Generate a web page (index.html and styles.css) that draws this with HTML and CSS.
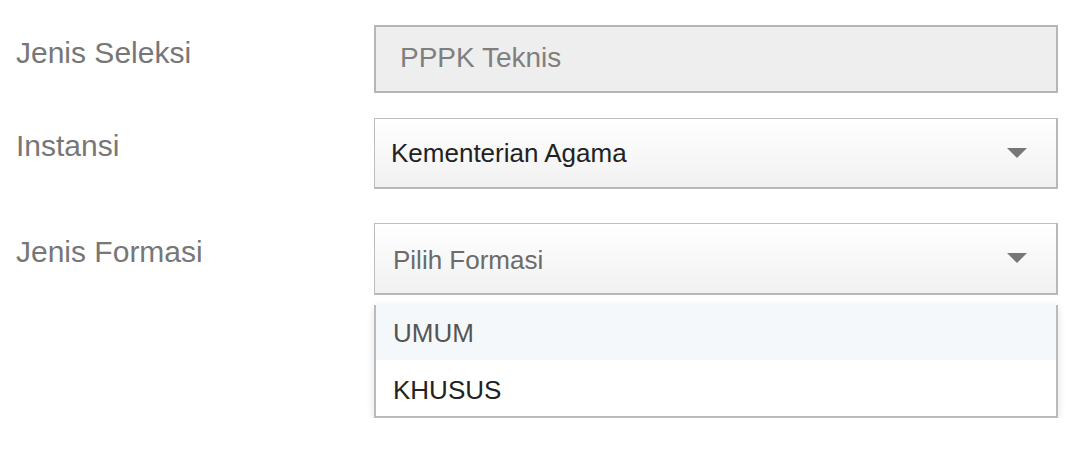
FILE: index.html
```html
<!DOCTYPE html>
<html lang="id">
<head>
<meta charset="utf-8">
<title>Formasi</title>
<link rel="stylesheet" href="styles.css">
</head>
<body>
<div class="form">
  <div class="row row-seleksi">
    <div class="label">Jenis Seleksi</div>
    <div class="control">
      <div class="field field-readonly">PPPK Teknis</div>
    </div>
  </div>
  <div class="row row-instansi">
    <div class="label">Instansi</div>
    <div class="control">
      <div class="field field-select">
        <span class="value">Kementerian Agama</span>
        <span class="caret"></span>
      </div>
    </div>
  </div>
  <div class="row row-formasi">
    <div class="label">Jenis Formasi</div>
    <div class="control">
      <div class="field field-select field-open">
        <span class="placeholder">Pilih Formasi</span>
        <span class="caret"></span>
      </div>
      <ul class="menu">
        <li class="item item-active">UMUM</li>
        <li class="item">KHUSUS</li>
      </ul>
    </div>
  </div>
</div>
</body>
</html>
```
FILE: styles.css
```css
html, body {
  margin: 0;
  padding: 0;
  background: #fff;
}
body {
  font-family: "Liberation Sans", Arial, sans-serif;
}
.form {
  padding: 25px 34px 0 16px;
  display: flex;
  flex-direction: column;
}
.row {
  display: grid;
  grid-template-columns: 358px 684px;
}
.row-seleksi { margin-bottom: 25px; }
.row-instansi { margin-bottom: 34px; }
.label {
  font-size: 30px;
  line-height: 34px;
  color: #777;
  padding-top: 11px;
}
.row-formasi .label { padding-top: 12px; }
.control {
  position: relative;
}
.field {
  box-sizing: border-box;
  border: 2px solid #b5b5b5;
  font-size: 26px;
  display: flex;
  align-items: center;
}
.field-readonly {
  height: 68px;
  background: #eeeeee;
  color: #7f7f7f;
  font-size: 28px;
  padding-left: 24px;
  padding-bottom: 2px;
}
.field-select {
  height: 71px;
  background: linear-gradient(#ffffff, #f1f1f1);
  padding-left: 16px;
  padding-right: 29px;
  justify-content: space-between;
  padding-top: 1px;
  border-width: 1px 2px 2px 1px;
  border-color: #bdbdbd #b8b8b8 #b8b8b8 #bdbdbd;
}
.field-open {
  height: 72px;
  padding-left: 18px;
  padding-top: 4px;
}
.value { color: #222; }
.placeholder { color: #6b6b6b; }
.caret {
  width: 0;
  height: 0;
  border-left: 10px solid transparent;
  border-right: 10px solid transparent;
  border-top: 10px solid #777;
}
.field-select .caret { margin-top: -2px; }
.field-open .caret { margin-top: -6px; }
.menu {
  list-style: none;
  margin: 10px 0 0 0;
  padding: 0;
  border: 2px solid #bbb;
  border-top: 0;
  box-shadow: 0 2px 8px rgba(0, 0, 0, 0.12);
  background: #fff;
  font-size: 26px;
}
.item {
  height: 55px;
  display: flex;
  align-items: center;
  padding-left: 17px;
  padding-top: 2px;
  box-sizing: border-box;
  color: #222;
}
.item + .item {
  height: 56px;
  padding-top: 4px;
}
.item-active {
  background: #f5f8fb;
  color: #555;
}
```
